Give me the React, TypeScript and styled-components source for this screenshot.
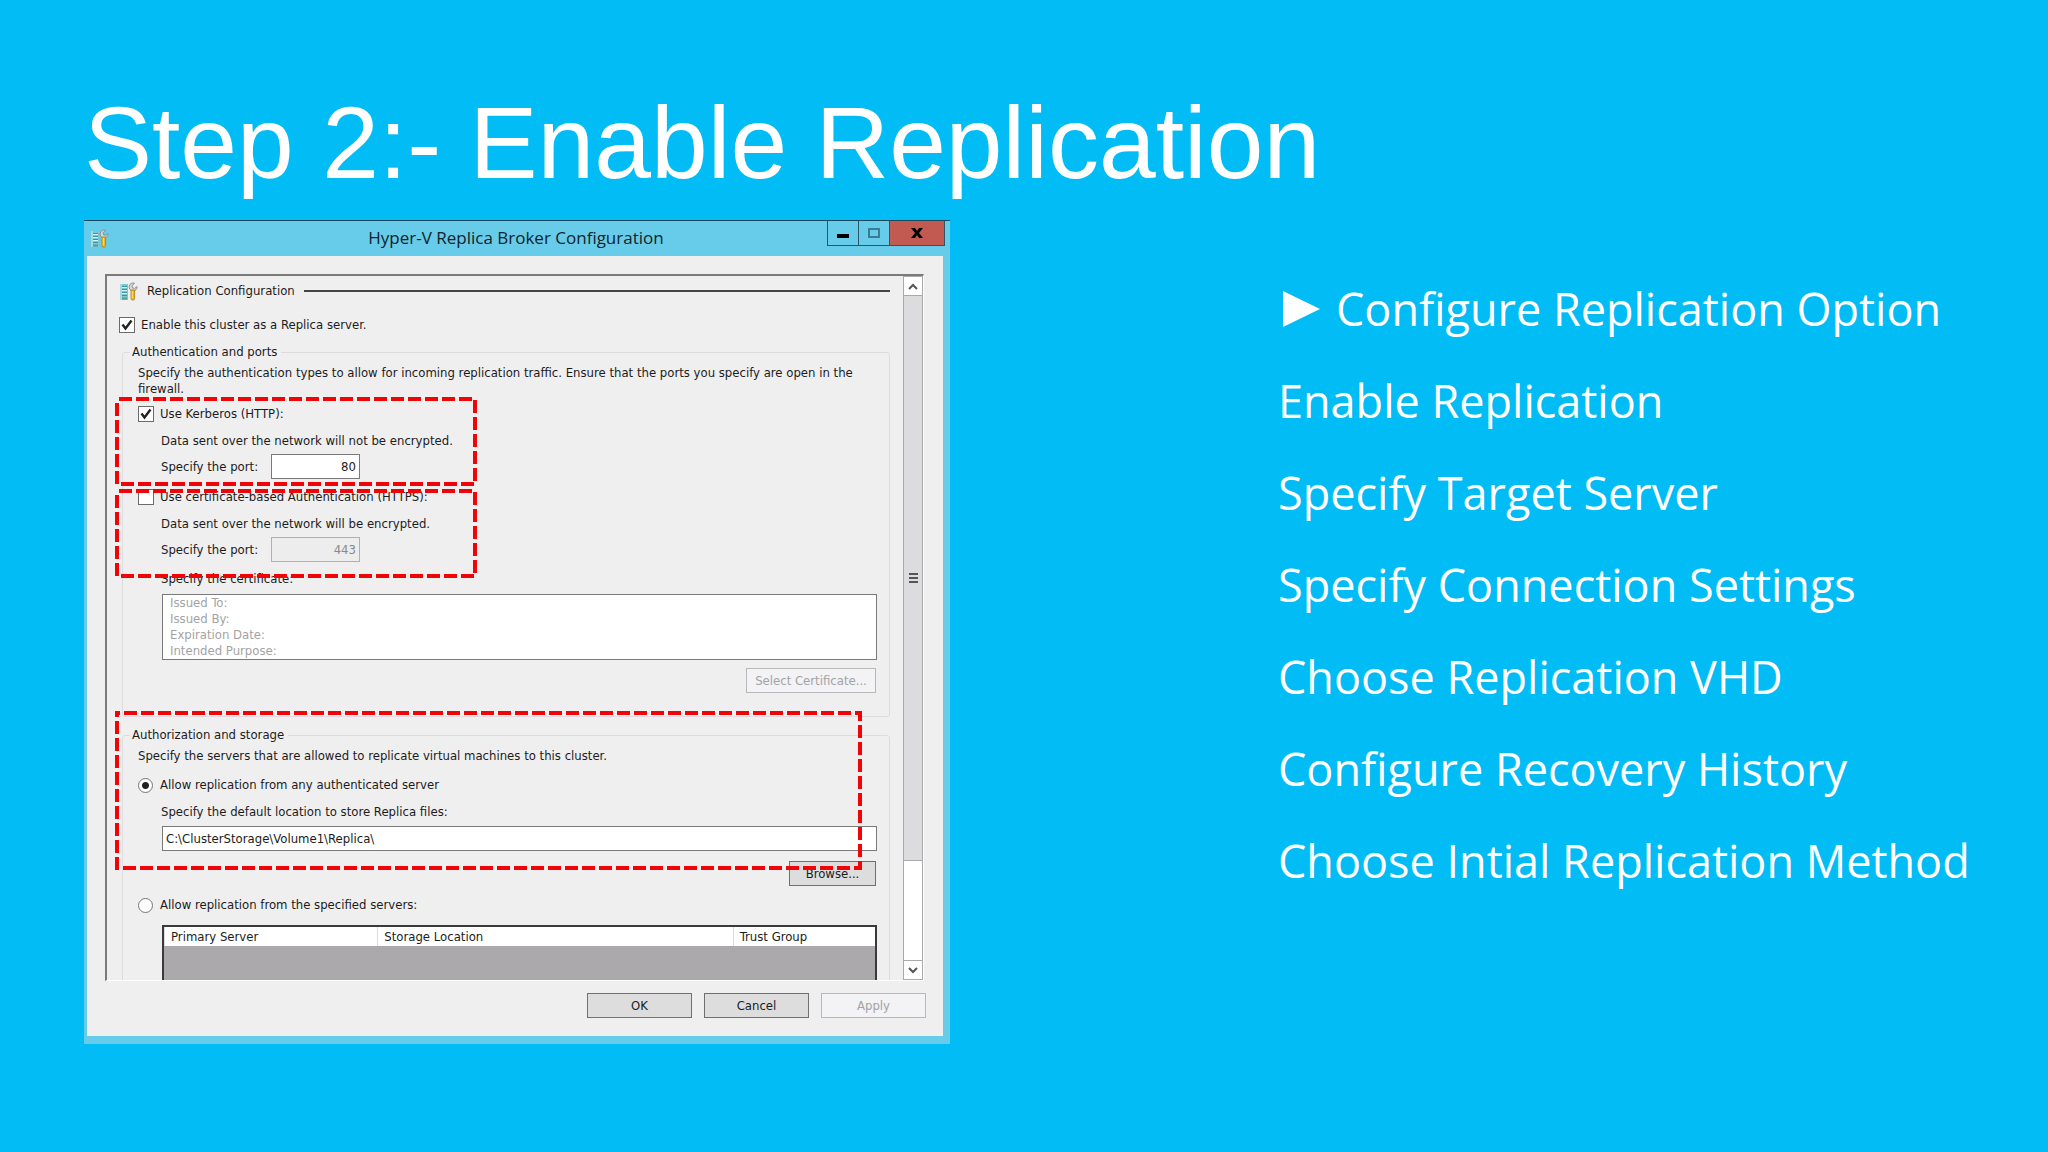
import React, { useState } from "react";
import styled, { createGlobalStyle } from "styled-components";

const uiFont = '"Open Sans", "Noto Sans", sans-serif';
const dialogFont = '"DejaVu Sans Condensed", Tahoma, "Open Sans", sans-serif';

const GlobalStyle = createGlobalStyle`
  *, *::before, *::after { box-sizing: border-box; }
  body { margin: 0; background: #02bcf5; }
`;

const Slide = styled.main`
  min-height: 100vh;
  padding: 83px 84px 0;
  background: #02bcf5;
  color: #fff;
`;

const SlideTitle = styled.h1`
  margin: 0 0 17px;
  font: 400 102px/120px "Liberation Sans", Arial, sans-serif;
`;

const Columns = styled.div`
  display: grid;
  grid-template-columns: minmax(0, 433fr) minmax(0, 343fr);
  column-gap: 328px;
  align-items: start;
`;

const Window = styled.section`
  padding: 0 7px 8px 3px;
  border-top: 1px solid #17485c;
  background: #66ccea;
  color: #1c1c1c;
  font: 13px/16px ${dialogFont};
`;

const TitleBar = styled.header`
  display: grid;
  grid-template-columns: 118px 1fr 118px;
  height: 35px;
  margin-right: -2px;
`;

const TitleIcon = styled.span`
  display: flex;
  padding: 8px 0 0 3px;
`;

const WindowTitle = styled.h2`
  margin: 0;
  text-align: center;
  font: 400 17px/34px ${uiFont};
  color: #10232b;
  white-space: nowrap;
`;

const WindowControls = styled.div`
  display: flex;
  justify-content: flex-end;
  align-items: flex-start;
`;

const ControlButton = styled.button<{ $close?: boolean }>`
  display: grid;
  place-items: center;
  width: ${(p) => (p.$close ? 55 : 32)}px;
  height: 25px;
  padding: 0;
  border: 1px solid #2a5666;
  border-top: 0;
  background: ${(p) => (p.$close ? "#c35a52" : "transparent")};
  & + & { border-left-width: 0; }
`;

const Client = styled.div`
  padding: 18px 17px 18px 18px;
  background: #f0eff0;
`;

const Pane = styled.div`
  display: grid;
  grid-template-columns: minmax(0, 1fr) 20px;
  grid-template-rows: 100%;
  height: 707px;
  margin-right: 2px;
  overflow: hidden;
  border: 2px solid #7b7b7b;
  border-right: 1px solid #fff;
  border-bottom: 1px solid #fff;
`;

const PaneContent = styled.div`
  padding: 6px 13px 0 12px;
`;

const PaneHeader = styled.div`
  display: flex;
  align-items: center;
  gap: 9px;
  height: 18px;
`;

const Rule = styled.hr`
  flex: 1;
  margin: 0;
  border: 0;
  border-top: 2px solid #454545;
`;

const Line = styled.div<{ $top?: number; $indent?: boolean }>`
  margin-top: ${(p) => p.$top ?? 0}px;
  padding-left: ${(p) => (p.$indent ? 23 : 0)}px;
`;

const Option = styled.label<{ $top: number }>`
  display: flex;
  align-items: center;
  gap: 6px;
  height: 16px;
  margin-top: ${(p) => p.$top}px;
`;

const Check = styled.input`
  appearance: none;
  flex: none;
  width: 16px;
  height: 16px;
  margin: 0;
  border: 1px solid #6b6b6b;
  background: #fff;
  &:checked {
    background: #fff
      url("data:image/svg+xml,%3Csvg xmlns='http://www.w3.org/2000/svg' viewBox='0 0 14 14'%3E%3Cpath d='M2.5 6.5l3 4 6-8' fill='none' stroke='%23222' stroke-width='2.4'/%3E%3C/svg%3E");
  }
`;

const Radio = styled.input`
  appearance: none;
  flex: none;
  width: 15px;
  height: 15px;
  margin: 0 1px 0 0;
  border: 1px solid #767676;
  border-radius: 50%;
  background: #fff;
  &:checked { background: radial-gradient(circle, #222 0 3px, #fff 4px); }
`;

const Group = styled.fieldset<{ $top: number }>`
  min-width: 0;
  margin: ${(p) => p.$top}px 0 0 3px;
  padding: 5px 12px 23px 15px;
  border: 1px solid #dcdcde;
  border-radius: 3px;
`;

const Legend = styled.legend`
  margin-left: -8px;
  padding: 0 4px 0 2px;
  line-height: 16px;
`;

const Highlighted = styled.div<{ $top: number }>`
  position: relative;
  margin-top: ${(p) => p.$top}px;
`;

const Marker = styled.svg<{ $top: number; $bottom: number; $width: string }>`
  position: absolute;
  z-index: 1;
  top: ${(p) => p.$top}px;
  left: -23px;
  width: ${(p) => p.$width};
  height: calc(100% + ${(p) => p.$bottom - p.$top}px);
  overflow: visible;
  pointer-events: none;
  rect {
    x: 2px;
    y: 2px;
    width: calc(100% - 4px);
    height: calc(100% - 4px);
    fill: none;
    stroke: #f00408;
    stroke-width: 4px;
    stroke-dasharray: 13px 4px;
  }
`;

const PortRow = styled.div`
  display: flex;
  align-items: center;
  margin-top: 5px;
  padding-left: 23px;
  label { width: 110px; }
`;

const TextBox = styled.input`
  height: 25px;
  padding: 0 3px;
  border: 1px solid #7a7a7a;
  background: #fff;
  color: #1c1c1c;
  font: inherit;
  &:disabled {
    border-color: #b0b0b0;
    background: #ededee;
    color: #8a8a8a;
  }
`;

const PortBox = styled(TextBox)`
  width: 89px;
  text-align: right;
`;

const PathBox = styled(TextBox)`
  display: block;
  width: calc(100% - 24px);
  margin: 6px 0 0 24px;
`;

const CertificateBox = styled.div`
  margin: 7px 0 0 24px;
  padding-left: 7px;
  border: 1px solid #7a7a7a;
  background: #fff;
  color: #a3a3a5;
`;

const ButtonRow = styled.div<{ $top: number; $gap?: number; $inset?: number }>`
  display: flex;
  justify-content: flex-end;
  gap: ${(p) => p.$gap ?? 0}px;
  margin-top: ${(p) => p.$top}px;
  padding-right: ${(p) => p.$inset ?? 0}px;
`;

const Button = styled.button<{ $width: number; $primary?: boolean }>`
  width: ${(p) => p.$width}px;
  height: 25px;
  padding: 0;
  border: 1px solid ${(p) => (p.$primary ? "#3c7fb1" : "#707070")};
  background: #dddddd;
  color: #1c1c1c;
  font: inherit;
  &:disabled {
    border-color: #b8b8ba;
    background: #f3f2f4;
    color: #a3a3a5;
  }
`;

const ServerTable = styled.table`
  width: calc(100% - 24px);
  margin: 12px 0 0 24px;
  table-layout: fixed;
  border-collapse: separate;
  border-spacing: 0;
  border: 2px solid #3a3a3a;
  th {
    height: 19px;
    padding: 1px 0 0 6px;
    border-left: 1px solid #dcdcdc;
    background: #fff;
    font-weight: 400;
    text-align: left;
  }
  td {
    height: 60px;
    padding: 0;
    background: #aba9ab;
  }
`;

const ScrollBar = styled.div`
  display: flex;
  flex-direction: column;
  border: solid #a9a9a9;
  border-width: 0 1px;
  background: #fff;
`;

const ScrollButton = styled.button`
  display: grid;
  place-items: center;
  flex: none;
  height: 20px;
  padding: 0;
  border: solid #a9a9a9;
  border-width: 1px 0;
  background: #fff;
`;

const Thumb = styled.div`
  display: grid;
  place-items: center;
  flex: none;
  height: 565px;
  border-bottom: 1px solid #a9a9a9;
  background: #dcdbdd;
`;

const Spacer = styled.div`
  flex: 1;
`;

const Steps = styled.ul`
  margin: 0;
  padding: 43px 0 0;
  list-style: none;
  font: 400 45px/92px ${uiFont};
`;

const Step = styled.li`
  display: flex;
  align-items: center;
  white-space: nowrap;
`;

const Arrow = styled.svg`
  flex: none;
  width: 37px;
  height: 36px;
  margin: 0 16px 0 5px;
  fill: #fff;
`;

function ServerToolsIcon() {
  return (
    <svg width="19" height="19" viewBox="0 0 19 19" aria-hidden="true">
      <path d="M1 2h8v16H1z" fill="#7cc6cf" />
      <path d="M1 2h2v16H1z" fill="#a5dbe0" />
      <path d="M3 4.500h5M3 7.500h5M3 10.500h5M3 13.500h5" stroke="#3d93a0" strokeWidth="1" />
      <path d="M3 5.500h5M3 8.500h5M3 11.500h5" stroke="#d7f3f5" strokeWidth="1" />
      <path d="M3 15.500h5v2H3z" fill="#56a17e" />
      <path d="M15.500 1.200a4 4 0 1 0 2.600 3.400l-2.600 1.800-2-.6-.4-2z" fill="#d4d6d8" stroke="#85898c" strokeWidth=".9" />
      <path d="M12 8h3.600v8.600c0 2-3.600 2-3.600 0z" fill="#eeb51c" stroke="#b27c10" strokeWidth=".8" />
      <path d="M13.300 9v7.500" stroke="#ffe37c" strokeWidth="1" />
    </svg>
  );
}

function DashedMarker({ top, bottom, width, offset }: { top: number; bottom: number; width: string; offset: number }) {
  return (
    <Marker $top={top} $bottom={bottom} $width={width} aria-hidden="true">
      <rect strokeDashoffset={offset} />
    </Marker>
  );
}

const steps = [
  "Configure Replication Option",
  "Enable Replication",
  "Specify Target Server",
  "Specify Connection Settings",
  "Choose Replication VHD",
  "Configure Recovery History",
  "Choose Intial Replication Method",
];

function ReplicaDialog() {
  const [enabled, setEnabled] = useState(true);
  const [kerberos, setKerberos] = useState(true);
  const [https, setHttps] = useState(false);
  const [source, setSource] = useState("any");

  return (
    <Window aria-label="Hyper-V Replica Broker Configuration">
      <TitleBar>
        <TitleIcon><ServerToolsIcon /></TitleIcon>
        <WindowTitle>Hyper-V Replica Broker Configuration</WindowTitle>
        <WindowControls>
          <ControlButton aria-label="Minimize">
            <svg width="12" height="12"><path d="M0 7h12v4H0z" /></svg>
          </ControlButton>
          <ControlButton aria-label="Maximize">
            <svg width="12" height="10"><path d="M1 1h10v8H1z" fill="none" stroke="#3c7c92" strokeWidth="2" /></svg>
          </ControlButton>
          <ControlButton aria-label="Close" $close>
            <svg width="12" height="10"><path d="M0 0h4l2 3 2-3h4L8 5l4 5H8L6 7l-2 3H0l4-5z" /></svg>
          </ControlButton>
        </WindowControls>
      </TitleBar>
      <Client>
        <Pane>
          <PaneContent>
            <PaneHeader>
              <ServerToolsIcon />
              <span>Replication Configuration</span>
              <Rule />
            </PaneHeader>
            <Option $top={17}>
              <Check type="checkbox" checked={enabled} onChange={(e) => setEnabled(e.target.checked)} />
              Enable this cluster as a Replica server.
            </Option>

            <Group $top={11}>
              <Legend>Authentication and ports</Legend>
              <Line>
                Specify the authentication types to allow for incoming replication traffic. Ensure that the ports you specify are open in the firewall.
              </Line>
              <Highlighted $top={9}>
                <DashedMarker top={-9} bottom={7} width="362px" offset={-2} />
                <Option $top={0}>
                  <Check type="checkbox" checked={kerberos} onChange={(e) => setKerberos(e.target.checked)} />
                  Use Kerberos (HTTP):
                </Option>
                <Line $top={11} $indent>Data sent over the network will not be encrypted.</Line>
                <PortRow>
                  <label htmlFor="http-port">Specify the port:</label>
                  <PortBox id="http-port" defaultValue="80" />
                </PortRow>
              </Highlighted>
              <Highlighted $top={10}>
                <DashedMarker top={0} bottom={16} width="362px" offset={-2} />
                <Option $top={0}>
                  <Check type="checkbox" checked={https} onChange={(e) => setHttps(e.target.checked)} />
                  Use certificate-based Authentication (HTTPS):
                </Option>
                <Line $top={11} $indent>Data sent over the network will be encrypted.</Line>
                <PortRow>
                  <label htmlFor="https-port">Specify the port:</label>
                  <PortBox id="https-port" defaultValue="443" disabled={!https} />
                </PortRow>
              </Highlighted>
              <Line $top={9} $indent>Specify the certificate:</Line>
              <CertificateBox>
                <div>Issued To:</div>
                <div>Issued By:</div>
                <div>Expiration Date:</div>
                <div>Intended Purpose:</div>
              </CertificateBox>
              <ButtonRow $top={8} $inset={1}>
                <Button $width={130} disabled={!https}>Select Certificate...</Button>
              </ButtonRow>
            </Group>

            <Group $top={10}>
              <Legend>Authorization and storage</Legend>
              <Highlighted $top={0}>
                <DashedMarker top={-37} bottom={19} width="calc(100% + 8px)" offset={-7} />
                <Line>Specify the servers that are allowed to replicate virtual machines to this cluster.</Line>
                <Option $top={13}>
                  <Radio type="radio" name="source" checked={source === "any"} onChange={() => setSource("any")} />
                  Allow replication from any authenticated server
                </Option>
                <Line $top={11} $indent><label htmlFor="location">Specify the default location to store Replica files:</label></Line>
                <PathBox id="location" defaultValue={"C:\\ClusterStorage\\Volume1\\Replica\\"} />
              </Highlighted>
              <ButtonRow $top={10} $inset={1}>
                <Button $width={87}>Browse...</Button>
              </ButtonRow>
              <Option $top={11}>
                <Radio type="radio" name="source" checked={source === "listed"} onChange={() => setSource("listed")} />
                Allow replication from the specified servers:
              </Option>
              <ServerTable>
                <colgroup>
                  <col width="30%" />
                  <col width="50%" />
                  <col width="20%" />
                </colgroup>
                <thead>
                  <tr><th>Primary Server</th><th>Storage Location</th><th>Trust Group</th></tr>
                </thead>
                <tbody>
                  <tr><td colSpan={3} /></tr>
                </tbody>
              </ServerTable>
            </Group>
          </PaneContent>
          <ScrollBar>
            <ScrollButton aria-label="Scroll up">
              <svg width="10" height="7"><path d="M1 6l4-4 4 4" fill="none" stroke="#555" strokeWidth="2" /></svg>
            </ScrollButton>
            <Thumb>
              <svg width="9" height="10"><path d="M0 1h9M0 5h9M0 9h9" stroke="#555" strokeWidth="2" /></svg>
            </Thumb>
            <Spacer />
            <ScrollButton aria-label="Scroll down">
              <svg width="10" height="7"><path d="M1 1l4 4 4-4" fill="none" stroke="#555" strokeWidth="2" /></svg>
            </ScrollButton>
          </ScrollBar>
        </Pane>
        <ButtonRow $top={12} $gap={12}>
          <Button $width={105} $primary>OK</Button>
          <Button $width={105}>Cancel</Button>
          <Button $width={105} disabled>Apply</Button>
        </ButtonRow>
      </Client>
    </Window>
  );
}

export default function App() {
  return (
    <>
      <GlobalStyle />
      <Slide>
        <SlideTitle>Step 2:- Enable Replication</SlideTitle>
        <Columns>
          <ReplicaDialog />
          <Steps>
            {steps.map((step, index) => (
              <Step key={step}>
                {index === 0 && <Arrow viewBox="0 0 37 36" aria-hidden="true"><path d="M0 0l37 18L0 36z" /></Arrow>}
                {step}
              </Step>
            ))}
          </Steps>
        </Columns>
      </Slide>
    </>
  );
}
